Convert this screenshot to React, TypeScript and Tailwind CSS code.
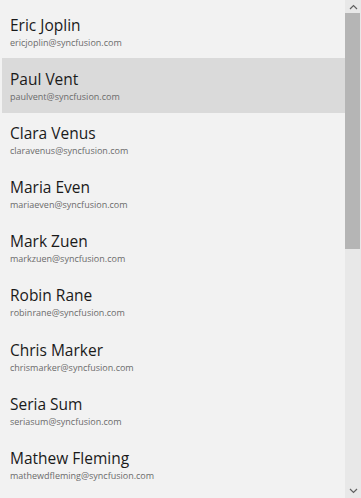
const contacts = [
  ["Eric Joplin", "ericjoplin@syncfusion.com"],
  ["Paul Vent", "paulvent@syncfusion.com"],
  ["Clara Venus", "claravenus@syncfusion.com"],
  ["Maria Even", "mariaeven@syncfusion.com"],
  ["Mark Zuen", "markzuen@syncfusion.com"],
  ["Robin Rane", "robinrane@syncfusion.com"],
  ["Chris Marker", "chrismarker@syncfusion.com"],
  ["Seria Sum", "seriasum@syncfusion.com"],
  ["Mathew Fleming", "mathewdfleming@syncfusion.com"],
];

export default function App() {
  return (
    <div
      className="flex h-[498px] w-[361px] overflow-hidden bg-[#f2f2f2]"
      style={{ fontFamily: '"Open Sans", "Noto Sans", sans-serif' }}
    >
      {/* list */}
      <ul className="flex-1 pt-[5px] pl-[2px]">
        {contacts.map(([name, email], i) => (
          <li
            key={email}
            className={`flex h-[54.25px] flex-col justify-center pl-[8px] ${
              i === 1 ? "-mt-[1px] pt-[1px] bg-[#dadada]" : ""
            }`}
          >
            <span className="text-[15.5px] leading-[20px] text-[#1a1a1a]">{name}</span>
            <span className="mt-[1px] text-[9px] leading-[13px] text-[#6b6b6b]">{email}</span>
          </li>
        ))}
      </ul>

      {/* scrollbar */}
      <div className="flex w-[16px] flex-col bg-[#e8e8e8]">
        <div className="flex h-[13px] items-center justify-center">
          <svg width="9" height="6" viewBox="0 0 9 6" fill="none" stroke="#606060" strokeWidth="1.2">
            <path d="M1 5L4.5 1.5L8 5" />
          </svg>
        </div>
        <div className="mr-[1px] h-[236px] bg-[#b5b5b5]" />
        <div className="flex-1" />
        <div className="flex h-[14px] items-center justify-center">
          <svg width="9" height="6" viewBox="0 0 9 6" fill="none" stroke="#606060" strokeWidth="1.2">
            <path d="M1 1L4.5 4.5L8 1" />
          </svg>
        </div>
      </div>
    </div>
  );
}
